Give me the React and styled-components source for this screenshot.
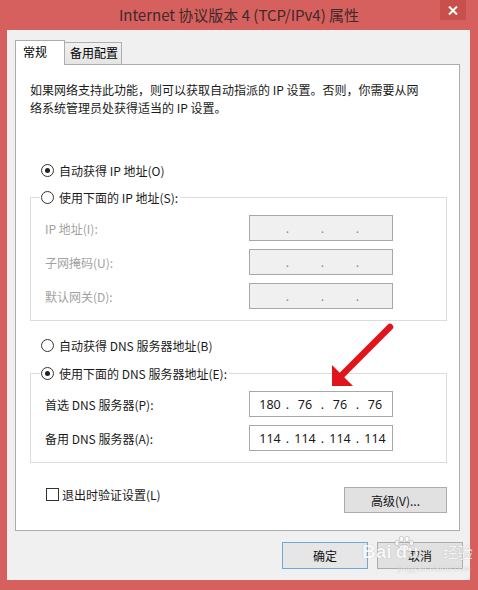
import React from "react";
import styled, { createGlobalStyle } from "styled-components";

const Global = createGlobalStyle`
  html, body { margin: 0; padding: 0; background: #d6605d; }
  body {
    font-family: "Noto Sans CJK SC", "Noto Sans", sans-serif;
    font-size: 12px;
    color: #1a1a1a;
  }
  * { box-sizing: border-box; }
`;

const Window = styled.div`
  position: relative;
  width: 478px;
  height: 590px;
  background: #d6605d;
  display: flex;
  flex-direction: column;
  overflow: hidden;
`;

const TitleBar = styled.div`
  height: 30px;
  flex: none;
  display: grid;
  grid-template-columns: 1fr auto 1fr;
`;

const Title = styled.div`
  grid-column: 2;
  font-size: 15px;
  line-height: 30px;
  color: #3e2a2a;
  white-space: nowrap;
`;

const CloseButton = styled.div`
  grid-column: 3;
  justify-self: end;
  align-self: start;
  width: 26px;
  height: 20px;
  margin-right: 12px;
  background: #c84f4c;
  display: flex;
  align-items: center;
  justify-content: center;
`;

const Frame = styled.div`
  flex: 1;
  margin: 0 8px 10px 7px;
  background: #f0f0f0;
  padding: 10px 7px 0 8px;
  display: flex;
  flex-direction: column;
`;

const TabRow = styled.div`
  height: 24px;
  display: flex;
  align-items: flex-end;
`;

const Tab = styled.div`
  position: relative;
  z-index: ${(p) => (p.$active ? 1 : 0)};
  width: ${(p) => p.$w}px;
  height: ${(p) => (p.$active ? 25 : 22)}px;
  margin-bottom: ${(p) => (p.$active ? -1 : 0)}px;
  background: ${(p) => (p.$active ? "#fff" : "linear-gradient(#f0f0f0, #e5e5e5)")};
  border: 1px solid #adadad;
  border-bottom: none;
  border-left: ${(p) => (p.$active ? "1px solid #adadad" : "none")};
  padding: ${(p) => (p.$active ? "2px 0 0 7px" : "1px 0 0 5px")};
  line-height: 18px;
  color: #000;
  white-space: nowrap;
`;

const Panel = styled.div`
  background: #fff;
  border: 1px solid #adadad;
  margin-right: 3px;
  padding: 16px 12px 17px 14px;
  display: flex;
  flex-direction: column;
`;

const Description = styled.p`
  margin: 0;
  line-height: 18px;
  color: #1a1a1a;
`;

const Choice = styled.div`
  display: flex;
  align-items: center;
  gap: 5px;
  height: 20px;
  margin-top: ${(p) => p.$top || 0}px;
  padding-left: ${(p) => p.$indent || 0}px;
  color: #1a1a1a;
  white-space: nowrap;
`;

const RadioMark = styled.span`
  flex: none;
  width: 13px;
  height: 13px;
  border: 1px solid #333;
  border-radius: 50%;
  background: #fff;
  display: flex;
  align-items: center;
  justify-content: center;
  &::after {
    content: "";
    width: 5px;
    height: 5px;
    border-radius: 50%;
    background: #222;
    display: ${(p) => (p.$checked ? "block" : "none")};
  }
`;

const CheckMark = styled.span`
  flex: none;
  width: 13px;
  height: 13px;
  border: 1px solid #333;
  background: #fff;
`;

const Group = styled.fieldset`
  margin: ${(p) => p.$top}px 0 0 0;
  min-width: 0;
  border: 1px solid #dcdcdc;
  padding: 8px 0 11px 0;
`;

const GroupLegend = styled.legend`
  margin-left: 9px;
  padding: 0 2px 0 1px;
  background: #fff;
`;

const FieldGrid = styled.div`
  display: grid;
  grid-template-columns: 204px 144px;
  row-gap: 8px;
  align-items: center;
  padding-left: 14px;
`;

const FieldLabel = styled.span`
  color: ${(p) => (p.$disabled ? "#a2a2a2" : "#1a1a1a")};
  white-space: nowrap;
`;

const IpBox = styled.div`
  width: 144px;
  height: 26px;
  border: 1px solid #a8a8a8;
  background: ${(p) => (p.$disabled ? "#f0f0f0" : "#fff")};
  padding-left: 6px;
  display: flex;
  align-items: center;
  font-family: "Noto Sans", "Noto Sans CJK SC", sans-serif;
  font-size: 12.5px;
  color: #1a1a1a;
`;

const Octet = styled.span`
  width: 28px;
  text-align: center;
`;

const Dot = styled.span`
  width: 7px;
  text-align: center;
  color: ${(p) => (p.$disabled ? "#8a8a8a" : "#1a1a1a")};
`;

const BottomRow = styled.div`
  margin-top: 24px;
  display: flex;
  justify-content: space-between;
  align-items: flex-start;
`;

const CheckChoice = styled.div`
  display: flex;
  align-items: center;
  gap: 3px;
  height: 14px;
  padding-left: 16px;
  color: #1a1a1a;
`;

const Button = styled.button`
  width: ${(p) => p.$w}px;
  height: ${(p) => p.$h || 27}px;
  padding: 0;
  margin: 0;
  border: 1px solid ${(p) => (p.$primary ? "#6fa7d9" : "#acacac")};
  background: ${(p) => (p.$primary ? "#e6e6e6" : "#e1e1e1")};
  font-family: inherit;
  font-size: 12px;
  color: #111;
`;

const ButtonRow = styled.div`
  margin-top: 11px;
  display: flex;
  justify-content: flex-end;
  gap: 9px;
`;

const ArrowMark = styled.svg`
  position: absolute;
  left: 318px;
  top: 318px;
  width: 80px;
  height: 75px;
  pointer-events: none;
`;

const Watermark = styled.div`
  position: absolute;
  left: 362px;
  top: 536px;
  pointer-events: none;
  display: flex;
  flex-direction: column;
  opacity: 0.75;
  color: #fff;
  text-shadow: 0 0 1px rgba(120, 120, 120, 0.8);
`;

const WmLogo = styled.div`
  display: flex;
  align-items: flex-end;
  height: 26px;
  font-family: "Liberation Sans", Arial, sans-serif;
  font-weight: bold;
  font-size: 19px;
  line-height: 20px;
`;

const WmPaw = styled.svg`
  align-self: flex-start;
  margin: 0 -20px 0 0;
`;

const WmCn = styled.span`
  font-family: "Noto Sans CJK SC", sans-serif;
  font-weight: normal;
  font-size: 15px;
  margin-left: 24px;
`;

const WmUrl = styled.div`
  margin: 2px 0 0 36px;
  font-family: "Liberation Sans", Arial, sans-serif;
  font-size: 8px;
  letter-spacing: 0.5px;
`;

const Radio = ({ checked, children, indent, top }) => (
  <Choice $indent={indent} $top={top}>
    <RadioMark $checked={checked} />
    <span>{children}</span>
  </Choice>
);

const IpField = ({ octets, disabled }) => (
  <IpBox $disabled={disabled}>
    {[0, 1, 2, 3].map((i) => (
      <React.Fragment key={i}>
        {i > 0 && <Dot $disabled={disabled}>.</Dot>}
        <Octet>{octets ? octets[i] : ""}</Octet>
      </React.Fragment>
    ))}
  </IpBox>
);

export default function App() {
  return (
    <>
      <Global />
      <Window>
        <TitleBar>
          <Title>Internet 协议版本 4 (TCP/IPv4) 属性</Title>
          <CloseButton>
            <svg width="10" height="9" viewBox="0 0 10 9">
              <path d="M1 0.5 L9 8.5 M9 0.5 L1 8.5" stroke="#fff" strokeWidth="2" />
            </svg>
          </CloseButton>
        </TitleBar>

        <Frame>
          <TabRow>
            <Tab $active $w={50}>常规</Tab>
            <Tab $w={57}>备用配置</Tab>
          </TabRow>

          <Panel>
            <Description>
              如果网络支持此功能，则可以获取自动指派的 IP 设置。否则，你需要从网
              <br />
              络系统管理员处获得适当的 IP 设置。
            </Description>

            <Radio checked indent={11} top={43}>自动获得 IP 地址(O)</Radio>

            <Group $top={7}>
              <GroupLegend>
                <Radio>使用下面的 IP 地址(S):</Radio>
              </GroupLegend>
              <FieldGrid>
                <FieldLabel $disabled>IP 地址(I):</FieldLabel>
                <IpField disabled />
                <FieldLabel $disabled>子网掩码(U):</FieldLabel>
                <IpField disabled />
                <FieldLabel $disabled>默认网关(D):</FieldLabel>
                <IpField disabled />
              </FieldGrid>
            </Group>

            <Radio indent={11} top={14}>自动获得 DNS 服务器地址(B)</Radio>

            <Group $top={8}>
              <GroupLegend>
                <Radio checked>使用下面的 DNS 服务器地址(E):</Radio>
              </GroupLegend>
              <FieldGrid>
                <FieldLabel>首选 DNS 服务器(P):</FieldLabel>
                <IpField octets={["180", "76", "76", "76"]} />
                <FieldLabel>备用 DNS 服务器(A):</FieldLabel>
                <IpField octets={["114", "114", "114", "114"]} />
              </FieldGrid>
            </Group>

            <BottomRow>
              <CheckChoice>
                <CheckMark />
                <span>退出时验证设置(L)</span>
              </CheckChoice>
              <Button $w={103} $h={26}>高级(V)...</Button>
            </BottomRow>
          </Panel>

          <ButtonRow>
            <Button $w={86} $primary>确定</Button>
            <Button $w={86}>取消</Button>
          </ButtonRow>
        </Frame>

        {/* red callout pointing at the DNS fields */}
        <ArrowMark viewBox="0 0 80 75">
          <path d="M72 9 L20 61" stroke="#e0141c" strokeWidth="6.5" strokeLinecap="round" />
          <polygon points="14,68 14,47 35,68" fill="#e0141c" />
        </ArrowMark>

        <Watermark>
          <WmLogo>
            <span>Bai</span>
            <WmPaw width="24" height="16" viewBox="0 0 24 16">
              <g fill="#fff" stroke="#9a9a9a" strokeWidth="0.6">
                <ellipse cx="5" cy="7" rx="2.2" ry="2.8" />
                <ellipse cx="9.5" cy="3" rx="2.2" ry="2.8" />
                <ellipse cx="15" cy="3" rx="2.2" ry="2.8" />
                <ellipse cx="19.5" cy="7" rx="2.2" ry="2.8" />
                <ellipse cx="12.2" cy="12" rx="5" ry="3.6" />
              </g>
            </WmPaw>
            <span>du</span>
            <WmCn>经验</WmCn>
          </WmLogo>
          <WmUrl>jingyan.baidu.com</WmUrl>
        </Watermark>
      </Window>
    </>
  );
}
